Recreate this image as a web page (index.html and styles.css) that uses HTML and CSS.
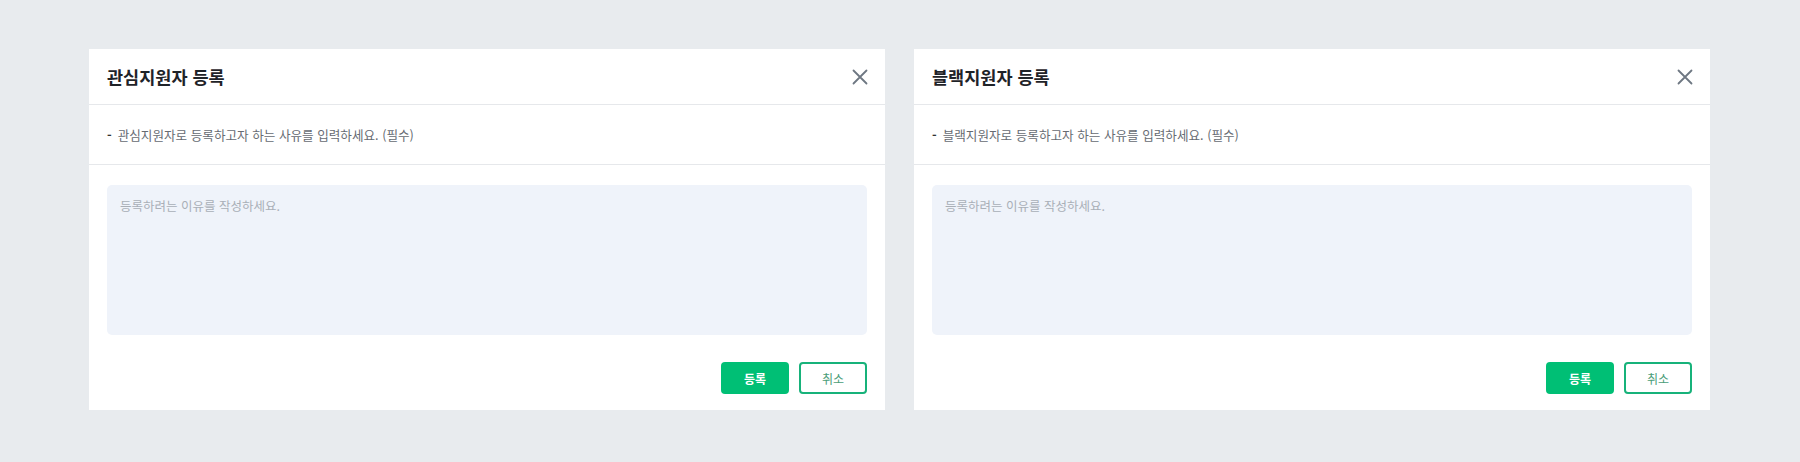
FILE: index.html
```html
<!DOCTYPE html>
<html lang="ko">
<head>
<meta charset="utf-8">
<title>지원자 등록</title>
<link rel="stylesheet" href="styles.css">
</head>
<body>
<div class="page">
  <section class="modal">
    <header class="modal-head">
      <h2 class="modal-title">관심지원자 등록</h2>
      <button class="close" type="button" aria-label="닫기">
        <svg width="16" height="16" viewBox="0 0 16 16"><path d="M1.5 1.5L14.5 14.5M14.5 1.5L1.5 14.5" stroke="#6e7782" stroke-width="1.8" fill="none" stroke-linecap="round"/></svg>
      </button>
    </header>
    <div class="modal-desc"><span class="dash">-</span><span>관심지원자로 등록하고자 하는 사유를 입력하세요. (필수)</span></div>
    <div class="modal-body">
      <textarea class="reason" placeholder="등록하려는 이유를 작성하세요."></textarea>
      <div class="actions">
        <button class="btn btn-primary" type="button">등록</button>
        <button class="btn btn-outline" type="button">취소</button>
      </div>
    </div>
  </section>
  <section class="modal">
    <header class="modal-head">
      <h2 class="modal-title">블랙지원자 등록</h2>
      <button class="close" type="button" aria-label="닫기">
        <svg width="16" height="16" viewBox="0 0 16 16"><path d="M1.5 1.5L14.5 14.5M14.5 1.5L1.5 14.5" stroke="#6e7782" stroke-width="1.8" fill="none" stroke-linecap="round"/></svg>
      </button>
    </header>
    <div class="modal-desc"><span class="dash">-</span><span>블랙지원자로 등록하고자 하는 사유를 입력하세요. (필수)</span></div>
    <div class="modal-body">
      <textarea class="reason" placeholder="등록하려는 이유를 작성하세요."></textarea>
      <div class="actions">
        <button class="btn btn-primary" type="button">등록</button>
        <button class="btn btn-outline" type="button">취소</button>
      </div>
    </div>
  </section>
</div>
</body>
</html>
```

FILE: styles.css
```css
* { box-sizing: border-box; }
html, body {
  margin: 0;
  padding: 0;
  background: #e8ebee;
  font-family: "Noto Sans CJK KR", "Noto Sans", sans-serif;
}
.page {
  display: flex;
  gap: 29px;
  padding: 49px 0 0 89px;
  height: 462px;
}
.modal {
  width: 796px;
  height: 361px;
  background: #ffffff;
  display: flex;
  flex-direction: column;
}
.modal-head {
  height: 56px;
  border-bottom: 1px solid #e6e8eb;
  display: flex;
  align-items: center;
  justify-content: space-between;
  padding: 0 17px 0 18px;
}
.modal-title {
  margin: 0;
  font-size: 17.5px;
  font-weight: 700;
  color: #1f2328;
}
.close {
  border: 0;
  background: none;
  padding: 0;
  width: 16px;
  height: 16px;
  display: flex;
  cursor: pointer;
}
.modal-desc {
  height: 60px;
  border-bottom: 1px solid #e6e8eb;
  display: flex;
  align-items: center;
  gap: 6px;
  padding: 0 18px;
  font-size: 12.6px;
  color: #666b72;
}
.dash { color: #333; font-weight: 700; }
.modal-body {
  padding: 20px 18px 16px;
  display: flex;
  flex-direction: column;
}
.reason {
  height: 150px;
  width: 100%;
  border: 0;
  border-radius: 5px;
  background: #eff3fa;
  resize: none;
  padding: 11px 13px;
  font-family: "Noto Sans CJK KR", "Noto Sans", sans-serif;
  font-size: 12.5px;
  color: #333;
  outline: none;
}
.reason::placeholder { color: #a9afb7; }
.actions {
  margin-top: 27px;
  display: flex;
  justify-content: flex-end;
  gap: 10px;
}
.btn {
  width: 68px;
  height: 32px;
  border-radius: 4px;
  font-family: "Noto Sans CJK KR", "Noto Sans", sans-serif;
  font-size: 12px;
  cursor: pointer;
}
.btn-primary {
  background: #00bf75;
  border: 0;
  color: #fff;
  font-weight: 700;
}
.btn-outline {
  background: #fff;
  border: 2px solid #17b27a;
  color: #4a9d78;
}
```
